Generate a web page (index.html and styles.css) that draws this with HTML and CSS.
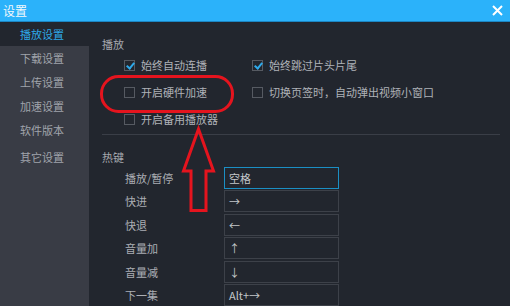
FILE: index.html
```html
<!DOCTYPE html>
<html lang="zh-CN">
<head>
    <meta charset="UTF-8">
    <title>设置</title>
    <link rel="stylesheet" href="styles.css">
</head>
<body>
    <div class="window">
        <div class="titlebar">
            <span class="title">设置</span>
            <svg class="close" width="11" height="11" viewBox="0 0 11 11">
                <path d="M1 1 L10 10 M10 1 L1 10" stroke="#fff" stroke-width="2" fill="none"/>
            </svg>
        </div>

        <div class="body">
            <ul class="sidebar">
                <li class="active">播放设置</li>
                <li>下载设置</li>
                <li>上传设置</li>
                <li>加速设置</li>
                <li>软件版本</li>
                <li class="last">其它设置</li>
            </ul>

            <div class="main">
                <div class="section-title">播放</div>
                <div class="options">
                    <label class="option"><span class="box checked"></span>始终自动连播</label>
                    <label class="option"><span class="box checked"></span>始终跳过片头片尾</label>
                    <label class="option"><span class="box"></span>开启硬件加速</label>
                    <label class="option"><span class="box"></span>切换页签时，自动弹出视频小窗口</label>
                    <label class="option"><span class="box"></span>开启备用播放器</label>
                </div>

                <div class="divider"></div>

                <div class="section-title">热键</div>
                <div class="hotkeys">
                    <span class="key-name">播放/暂停</span>
                    <div class="key-input focused">空格</div>
                    <span class="key-name">快进</span>
                    <div class="key-input">→</div>
                    <span class="key-name">快退</span>
                    <div class="key-input">←</div>
                    <span class="key-name">音量加</span>
                    <div class="key-input">↑</div>
                    <span class="key-name">音量减</span>
                    <div class="key-input">↓</div>
                    <span class="key-name">下一集</span>
                    <div class="key-input">Alt+→</div>
                </div>
            </div>
        </div>
    </div>

    <!-- red annotation drawn over the dialog -->
    <svg class="marks" width="510" height="306" viewBox="0 0 510 306">
        <rect x="101.5" y="76.5" width="131" height="35" rx="17" ry="17"
              fill="none" stroke="#e5141e" stroke-width="3"/>
        <polygon points="198.5,129 213.5,171 206,171 206,210.5 191,210.5 191,171 183.5,171"
                 fill="none" stroke="#e5141e" stroke-width="3" stroke-linejoin="miter"/>
    </svg>
</body>
</html>
```

FILE: styles.css
```css
* {
    box-sizing: border-box;
    margin: 0;
    padding: 0;
}

body {
    width: 510px;
    height: 306px;
    overflow: hidden;
    position: relative;
    background: #22262e;
    font-family: "Noto Sans CJK SC", "Noto Sans", sans-serif;
    font-size: 11px;
    color: #abaeb4;
}

.window {
    height: 306px;
    display: flex;
    flex-direction: column;
}

.titlebar {
    height: 22px;
    flex: none;
    background: #2bb2fa;
    border-bottom: 1px solid #1c86c4;
    display: flex;
    align-items: center;
    justify-content: space-between;
    padding: 0 7px 0 3px;
}

.title {
    color: #f4f8fb;
    font-size: 12px;
    line-height: 14px;
}

.body {
    flex: 1;
    display: flex;
}

.sidebar {
    width: 89px;
    flex: none;
    list-style: none;
    background: #393c45;
}

.sidebar li {
    height: 24px;
    line-height: 24px;
    padding-left: 20px;
    color: #a0a4ab;
}

.sidebar li.active {
    background: #22262e;
    color: #2ea9ea;
}

.sidebar li.last {
    height: 28px;
    line-height: 30px;
}

.main {
    flex: 1;
    padding: 15px 10px 0 13px;
}

.section-title {
    line-height: 14px;
    color: #a6a9af;
}

.options {
    display: grid;
    grid-template-columns: 128px 1fr;
    grid-auto-rows: 27px;
    margin: 0.5px 0 0 22px;
}

.option {
    display: flex;
    align-items: center;
    gap: 6px;
    color: #afb2b8;
    white-space: nowrap;
}

.box {
    width: 11px;
    height: 11px;
    border: 1px solid #565a62;
    position: relative;
    flex: none;
}

.box.checked::after {
    content: "";
    position: absolute;
    left: 3px;
    top: 0px;
    width: 3px;
    height: 6px;
    border: solid #2ea9ea;
    border-width: 0 2px 2px 0;
    transform: rotate(40deg);
}

.divider {
    height: 1px;
    background: #3a3e47;
    margin: 1px 0 15.5px;
}

.hotkeys {
    display: grid;
    grid-template-columns: 99px 115px;
    grid-auto-rows: 22px;
    row-gap: 1.4px;
    margin: 3px 0 0 23px;
    align-items: center;
}

.key-name {
    color: #abaeb4;
}

.key-input {
    height: 22px;
    border: 1px solid #3d4149;
    line-height: 20px;
    padding-left: 4px;
    color: #c4c6ca;
}

.key-input.focused {
    border-color: #1b8fc4;
}

.marks {
    position: absolute;
    left: 0;
    top: 0;
    pointer-events: none;
}
```
